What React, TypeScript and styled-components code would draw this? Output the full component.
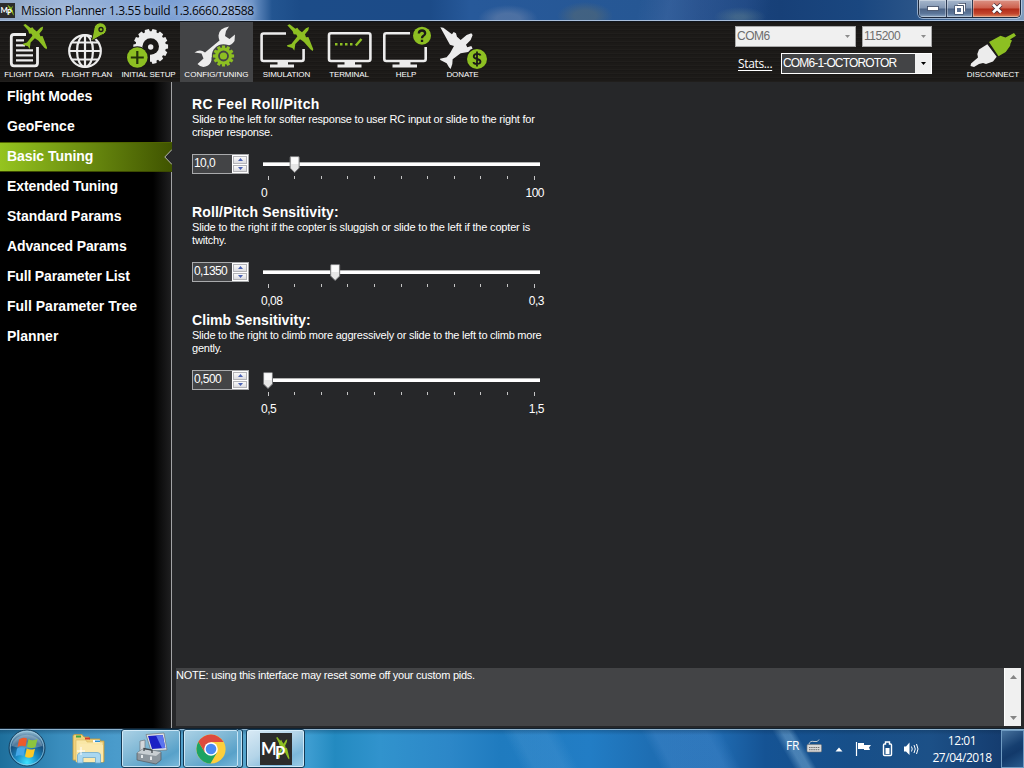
import React from "react";
import styled, { createGlobalStyle } from "styled-components";

const GlobalStyle = createGlobalStyle`
  * { box-sizing: border-box; }
  body { margin: 0; background: #262729; overflow: hidden; }
  svg { display: block; flex: none; }
`;

const sans = `"Liberation Sans", Arial, sans-serif`;
const ui = `"Open Sans", "Noto Sans", sans-serif`;

const Screen = styled.div`
  width: 1024px;
  height: 768px;
  display: flex;
  flex-direction: column;
  overflow: hidden;
  background: #262729;
  font-family: ${sans};
  color: #fff;
`;

/* ---------- title bar ---------- */
const TitleBar = styled.header`
  height: 22px;
  flex: none;
  display: flex;
  align-items: flex-start;
  border-bottom: 1px solid #11151c;
  box-shadow: inset 0 -1px 0 #a9bfdc;
  background:
    radial-gradient(ellipse 30px 14px at 508px 19px, rgba(86, 118, 165, 0.8) 40%, transparent),
    radial-gradient(ellipse 28px 14px at 585px 16px, rgba(72, 100, 125, 0.8) 40%, transparent),
    radial-gradient(ellipse 26px 10px at 740px 17px, rgba(92, 125, 140, 0.5) 20%, transparent),
    linear-gradient(100deg, transparent 630px, rgba(90, 130, 190, 0.3) 660px, rgba(60, 100, 165, 0.25) 735px, transparent 760px),
    linear-gradient(90deg, #8fa5c4 0, #9db5d8 60px, #88a8d6 130px, #7a9fd4 170px, #93afdc 225px, #6f95c8 252px, #235591 272px, #1c4c88 300px, #1c4b88 430px, #27599a 470px, #265794 640px, #1c4681 700px, #174078 780px, #1a4780 860px, #2a5488 915px, #7f9cbd 1024px);
`;
const TitleText = styled.h1`
  margin: 0;
  padding-left: 6px;
  flex: 1;
  font: 400 12px/21px ${ui};
  letter-spacing: -0.29px;
  color: #05080e;
  text-shadow: 0 0 6px rgba(255, 255, 255, 0.6);
`;
const LogoSlot = styled.div`
  padding-top: 3px;
`;
const WindowButtons = styled.div`
  display: flex;
  height: 18px;
  margin-right: 3px;
  border: 1px solid #1e2a3e;
  border-top: 0;
  border-radius: 0 0 5px 5px;
  overflow: hidden;
  box-shadow: 0 0 0 1px rgba(215, 228, 245, 0.6);
`;
const WindowButton = styled.button<{ $w: number; $close?: boolean }>`
  width: ${(p) => p.$w}px;
  padding: 0;
  border: 0;
  border-left: ${(p) => (p.$w === 27 ? "0" : "1px solid #2c3a52")};
  display: grid;
  place-items: center;
  box-shadow: inset 0 0 0 1px rgba(255, 255, 255, 0.35);
  background: ${(p) =>
    p.$close
      ? "linear-gradient(#dc9385 0, #cd5f4c 48%, #b02a17 52%, #c2442c 80%, #dd8a62)"
      : "linear-gradient(#a6b7cd 0, #8296b2 48%, #4d6486 52%, #5c7699 80%, #8faac8)"};
`;

/* ---------- toolbar ---------- */
const Toolbar = styled.nav`
  height: 60px;
  flex: none;
  display: flex;
  padding-left: 1px;
  background:
    repeating-linear-gradient(0deg, rgba(255, 240, 220, 0.018) 0 1px, transparent 1px 3px, rgba(0, 0, 0, 0.1) 3px 4px),
    #1c1a18;
`;
const Tool = styled.button<{ $w: number; $active?: boolean }>`
  width: ${(p) => p.$w}px;
  height: 60px;
  padding: 0;
  border: 0;
  display: flex;
  flex-direction: column;
  align-items: center;
  gap: 1px;
  background: ${(p) => (p.$active ? "#434446" : "transparent")};
`;
const ToolLabel = styled.span<{ $track: number }>`
  font: 400 8px/9px ${sans};
  letter-spacing: ${(p) => p.$track}px;
  color: #fff;
  white-space: nowrap;
`;
const Spacer = styled.div`
  flex: 1;
`;
const Connection = styled.div`
  width: 197px;
  padding-top: 4px;
  display: flex;
  flex-direction: column;
  gap: 6px;
  margin-right: 30px;
`;
const ConnRow = styled.div`
  display: flex;
  justify-content: space-between;
  align-items: center;
`;
const Combo = styled.div<{ $w: number; $dark?: boolean }>`
  width: ${(p) => p.$w}px;
  height: 21px;
  display: flex;
  align-items: stretch;
  justify-content: space-between;
  border: 1px solid ${(p) => (p.$dark ? "#fff" : "#a9a9a9")};
  background: ${(p) => (p.$dark ? "#434446" : "#f0f0f0")};
  color: ${(p) => (p.$dark ? "#fff" : "#6d6d6d")};
  font: 400 12px/18px ${sans};
  letter-spacing: ${(p) => (p.$dark ? "-0.85px" : "-0.5px")};
  padding-left: 1px;
`;
const ComboArrow = styled.div<{ $dark?: boolean }>`
  width: 16px;
  display: grid;
  place-items: center;
  background: #f0f0f0;
  color: ${(p) => (p.$dark ? "#000" : "#8c8c8c")};
`;
const StatsLink = styled.a`
  font: 400 12px/14px ${ui};
  letter-spacing: -0.35px;
  color: #fff;
  padding-left: 3px;
  text-decoration: underline;
  text-underline-offset: 2px;
`;

/* ---------- body ---------- */
const Body = styled.div`
  height: 646px;
  display: flex;
`;
const Sidebar = styled.aside`
  width: 172px;
  display: flex;
  flex-direction: column;
  border-right: 1px solid #a3a4a6;
  background: linear-gradient(90deg, #000 153px, #1f1f20 171px);
`;
const NavItem = styled.a<{ $active?: boolean; $track: number }>`
  height: 30px;
  width: ${(p) => (p.$active ? "172px" : "auto")};
  flex: none;
  display: flex;
  align-items: center;
  justify-content: space-between;
  padding-left: 7px;
  font: 700 14px/28px ${sans};
  letter-spacing: ${(p) => p.$track}px;
  color: #fff;
  ${(p) =>
    p.$active &&
    `background: linear-gradient(90deg, #95c41f, #405400);
     box-shadow: inset 0 1px 0 #506400, inset 0 -1px 0 #3c4a00;`}
`;
const NavLabel = styled.span`
  padding-bottom: 2px;
`;
const Main = styled.main`
  flex: 1;
  display: flex;
  flex-direction: column;
  justify-content: space-between;
  padding: 14px 3px 2px 3px;
`;
const Sections = styled.div`
  padding-left: 17px;
`;
const Section = styled.section`
  width: 356px;
  height: 108px;
  display: flex;
  flex-direction: column;
`;
const Heading = styled.h2<{ $track: number }>`
  margin: 0;
  font: 700 14px/17px ${sans};
  letter-spacing: ${(p) => p.$track}px;
  white-space: nowrap;
`;
const Description = styled.p<{ $track: number }>`
  margin: 0;
  height: 41px;
  font: 400 11px/13px ${sans};
  letter-spacing: ${(p) => p.$track}px;
  white-space: pre-line;
`;
const Control = styled.div`
  display: flex;
  gap: 12px;
`;
const NumberBox = styled.div`
  width: 57px;
  height: 20px;
  display: flex;
  justify-content: space-between;
  border: 1px solid #a9aaac;
  background: #434446;
  font: 400 12px/17px ${sans};
  letter-spacing: -0.6px;
  padding-left: 1px;
`;
const Spinner = styled.div`
  width: 16px;
  padding: 1px;
  display: flex;
  flex-direction: column;
  gap: 1px;
  background: #fff;
`;
const SpinButton = styled.button`
  flex: 1;
  padding: 0;
  border: 1px solid #b4b4b8;
  display: grid;
  place-items: center;
  background: linear-gradient(#fafafa, #dcdce0);
`;
const SliderColumn = styled.div`
  width: 283px;
  display: flex;
  flex-direction: column;
`;
const RangeLabels = styled.div`
  display: flex;
  justify-content: space-between;
  margin-top: 1px;
  font: 400 12px/14px ${sans};
  letter-spacing: -0.5px;
`;
const Note = styled.div`
  height: 58px;
  display: flex;
  margin-left: 1px;
  justify-content: space-between;
  background: #434446;
  font: 400 11px/14px ${sans};
  letter-spacing: -0.24px;
`;
const ScrollBar = styled.div`
  width: 17px;
  display: flex;
  flex-direction: column;
  align-items: center;
  justify-content: space-between;
  padding: 7px 0 6px;
  background: #f0f0f0;
  border-left: 1px solid #fff;
`;

/* ---------- taskbar ---------- */
const Taskbar = styled.footer`
  height: 40px;
  flex: none;
  display: flex;
  align-items: stretch;
  border-top: 1px solid #122230;
  box-shadow: inset 0 1px 0 #8db3cf;
  background:
    linear-gradient(rgba(10, 40, 70, 0.35), transparent 6px),
    linear-gradient(240deg, transparent 199px, rgba(150, 200, 235, 0.4) 205px 211px, transparent 219px),
    linear-gradient(242deg, transparent 268px, rgba(100, 160, 225, 0.24) 282px 328px, transparent 339px),
    linear-gradient(242deg, transparent 411px, rgba(120, 180, 230, 0.17) 424px 450px, transparent 462px),
    linear-gradient(90deg, #1e6f9c 0, #3a8dbd 60px, #4a9bcb 115px, #56a5cd 240px, #3c9cd0 310px, #238ac0 335px, #3193cd 380px, #2c87c8 450px, #1f7bbf 500px, #227dc5 590px, #1e6eb3 650px, #1f6ab0 720px, #155394 765px, #174f89 850px, #1c5087 930px, #153d70 1000px);
`;
const StartSlot = styled.div`
  width: 61px;
  padding-left: 8px;
`;
const PinSlot = styled.div`
  width: 60px;
  padding: 4px 0 0 11px;
`;
const TaskButton = styled.button<{ $w: number; $gap: number; $bright?: boolean }>`
  width: ${(p) => p.$w}px;
  margin: 0 ${(p) => p.$gap}px 0 0;
  padding: 0;
  display: grid;
  place-items: center;
  border: 1px solid #143a55;
  border-radius: 3px;
  box-shadow: inset 0 0 0 1px rgba(225, 244, 255, 0.75);
  background: ${(p) =>
    p.$bright
      ? "linear-gradient(150deg, #d9eaf5, #b3d4e8 45%, #7db8da 75%, #9ccce6)"
      : "linear-gradient(150deg, #acd2e6, #7db6d4 45%, #58a1c9 75%, #7cbadb)"};
`;
const StackEdge = styled.div`
  width: 5px;
  margin: 0 3px 0 -1px;
  border: 1px solid #143a55;
  border-left: 0;
  border-radius: 0 3px 3px 0;
  background: #6fb0d3;
  box-shadow: inset -1px 0 0 rgba(225, 244, 255, 0.75);
`;
const Tray = styled.div`
  display: flex;
  align-items: center;
`;
const Lang = styled.span`
  font: 400 12px/16px ${ui};
  letter-spacing: -0.3px;
  padding-bottom: 5px;
  width: 20px;
`;
const TrayIconSlot = styled.div`
  padding-bottom: 3px;
  margin-right: -1px;
`;
const Clock = styled.div`
  width: 76px;
  padding: 1px 2px 0 0;
  display: flex;
  flex-direction: column;
  align-items: center;
  font: 400 12px/17px ${ui};
  letter-spacing: -0.45px;
`;
const ShowDesktop = styled.div`
  width: 23px;
  margin-top: 1px;
  border: 1px solid #6f9bc2;
  background: linear-gradient(150deg, #47729d, #163f70 45%, #12396a 60%, #285a8c);
`;

/* ---------- drawings ---------- */
const GREEN = "#8dbf22";
const WHITE = "#ececec";

const Triangle = ({ up, w = 5, h = 3, color = "currentColor" }: { up?: boolean; w?: number; h?: number; color?: string }) => (
  <svg width={w} height={h} viewBox="0 0 10 6" preserveAspectRatio="none">
    <path d={up ? "M0 6L5 0L10 6Z" : "M0 0L5 6L10 0Z"} fill={color} />
  </svg>
);

/* Twin-engine plane banking to the upper right, in an 80 by 80 box */
const Plane = ({ x, y, sx, sy }: { x: number; y: number; sx: number; sy: number }) => (
  <path
    d="M1 3L8 0L25 13L31 10L36 17L45 24L57 12L66 8L64 18L54 30L57 39L64 38L67 45L79 75L77 80L70 75L51 53L45 49L39 45L25 59L22 79L16 71L1 67L0 63L13 59L31 37L28 31L20 30L17 21Z"
    fill={GREEN}
    transform={`translate(${x} ${y}) scale(${sx} ${sy})`}
  />
);

function gearPath(cx: number, cy: number, outer: number, inner: number, teeth: number) {
  let d = "";
  for (let i = 0; i < teeth; i++) {
    const a = (i / teeth) * Math.PI * 2;
    const step = (Math.PI * 2) / teeth;
    [[-0.38, inner], [-0.27, outer], [0.27, outer], [0.38, inner]].forEach(([k, r], j) => {
      const t = a + k * step;
      d += `${i === 0 && j === 0 ? "M" : "L"}${(cx + r * Math.cos(t)).toFixed(2)} ${(cy + r * Math.sin(t)).toFixed(2)}`;
    });
  }
  return d + "Z";
}

const FlightDataIcon = () => (
  <>
    <path d="M25 12.500H13Q10.300 12.500 10.300 15V41Q10.300 43.800 13 43.800H34Q36.500 43.800 36.500 41V25" fill="none" stroke={WHITE} strokeWidth="2.800" />
    <path d="M15 18.300H23M15 23.300H24M15 28.300H32M15 33.300H32M15 38.300H32" stroke={WHITE} strokeWidth="2.200" />
    <Plane x={22} y={2} sx={0.305} sy={0.315} />
  </>
);
const FlightPlanIcon = () => (
  <>
    <g fill="none" stroke={WHITE} strokeWidth="2.200">
      <circle cx="28" cy="29" r="15.800" />
      <ellipse cx="28" cy="29" rx="8" ry="15.800" />
      <path d="M28 13V45M12 29H44M15 20.500H41M15 37.500H41" />
    </g>
    <path d="M34.500 19L37 6.500A6.300 6.300 0 1 1 44.500 13.200Z" fill={GREEN} stroke="#1b1917" strokeWidth="1" />
    <circle cx="44" cy="7.500" r="2" fill="none" stroke="#1b1917" strokeWidth="1.300" />
  </>
);
const SetupIcon = () => (
  <>
    <path d={gearPath(33.7, 24.5, 17.5, 15.2, 14)} fill={WHITE} />
    <circle cx="33.700" cy="24.500" r="8.300" fill="#1b1917" />
    <path d="M33 27V44H18Z" fill="#1b1917" />
    <circle cx="33.700" cy="25" r="2.700" fill={WHITE} />
    <circle cx="20.300" cy="35.500" r="11.300" fill="#1b1917" />
    <circle cx="20.300" cy="35.500" r="10.300" fill={GREEN} />
    <path d="M20.300 29V42M13.800 35.500H26.800" stroke="#23320a" strokeWidth="2.200" />
  </>
);
const ConfigIcon = () => (
  <>
    <path
      d="M49 4.500Q39 6 38.500 13.500Q38.500 16.500 39.500 18.500L25 30.500Q20 26.500 14.500 30.500L21.500 31.500L23.500 36.500L17.500 42Q22 47 28 43.500Q32 41 31.500 35.500L45 23.500Q51 24.500 54.500 19L55 12.500L49.500 17L45 14L46 9Z"
      fill={WHITE}
    />
    <circle cx="43.500" cy="34" r="11.700" fill="#434446" />
    <path d={gearPath(43.5, 34, 10.7, 8.4, 12)} fill={GREEN} />
    <circle cx="43.500" cy="34" r="4.500" fill="none" stroke="#434446" strokeWidth="1.800" />
  </>
);
const monitor = { fill: "none", stroke: WHITE, strokeWidth: 2.6 };
const SimulationIcon = () => (
  <>
    <path d="M33 11.500H10.600Q8.600 11.500 8.600 13.500V37Q8.600 39 10.600 39H48.600Q50.600 39 50.600 37V27" {...monitor} />
    <path d="M24.500 39H35V42.500H41V45.500H17V42.500H24.500Z" fill={WHITE} />
    <Plane x={34} y={2.300} sx={0.333} sy={0.333} />
  </>
);
const TerminalIcon = () => (
  <>
    <rect x="9" y="11.300" width="41.400" height="27.700" rx="2" {...monitor} />
    <path d="M24.500 39H35V42.500H41.500V45.500H17.500V42.500H24.500Z" fill={WHITE} />
    <path d="M15 22.300H17.500M20 22.300H22.500M25 22.300H27.500M30 22.300H32.500" stroke={GREEN} strokeWidth="2.400" />
    <path d="M35.800 23.500L41.500 17" stroke={GREEN} strokeWidth="2.400" />
  </>
);
const HelpIcon = () => (
  <>
    <path d="M32 11.300H8.300Q6.300 11.300 6.300 13.300V37Q6.300 39 8.300 39H45.700Q47.700 39 47.700 37V25" {...monitor} />
    <path d="M21.500 39H32.500V42.500H39V45.500H14.500V42.500H21.500Z" fill={WHITE} />
    <circle cx="44" cy="13.700" r="9" fill={GREEN} />
    <path d="M40.800 11.500Q41 8.500 44 8.500T47.200 11.300Q47.200 13 45.200 14Q44 14.700 44 16.300M44 17.700V20" fill="none" stroke="#1b1917" strokeWidth="2.300" />
  </>
);
const DonateIcon = () => (
  <>
    <path
      d="M571 22L580 23L606 43L611 36L618 40L621 50L632 60L650 45L664 40L668 45L662 60L648 74L652 82L664 78L669 88L680 112L655 96L632 100L608 118L607 132L602 147L597 142L590 130L571 120L570 116L590 112L600 100L612 78L600 74L592 60Z"
      fill={WHITE}
      transform="translate(-184 -2) scale(0.3333)"
    />
    <circle cx="43" cy="37" r="11.200" fill="#1b1917" />
    <circle cx="43" cy="37" r="10" fill={GREEN} />
    <path d="M46.500 33.500Q46 31.800 43 31.800T39.700 34.300Q39.700 36.300 43 37T46.500 39.600Q46.500 42 43 42T39.500 40M43 29.500V44.500" fill="none" stroke="#1b1917" strokeWidth="1.800" />
  </>
);

const tools = [
  { label: "FLIGHT DATA", w: 56, track: -0.1, Icon: FlightDataIcon },
  { label: "FLIGHT PLAN", w: 60, track: -0.1, Icon: FlightPlanIcon },
  { label: "INITIAL SETUP", w: 63, track: -0.12, Icon: SetupIcon },
  { label: "CONFIG/TUNING", w: 73, track: 0.02, Icon: ConfigIcon, active: true },
  { label: "SIMULATION", w: 67, track: -0.1, Icon: SimulationIcon },
  { label: "TERMINAL", w: 58, track: -0.1, Icon: TerminalIcon },
  { label: "HELP", w: 56, track: -0.1, Icon: HelpIcon },
  { label: "DONATE", w: 57, track: -0.1, Icon: DonateIcon },
];

const PlugIcon = () => (
  <svg width="62" height="47" viewBox="0 0 62 47">
    <path d="M12 45L8.500 44L9 41.500L16 35.500L15.300 32L17 27.500L25.300 22.300L34.700 34.700L31 39.500L24 42L21 41L17 42Z" fill={WHITE} />
    <path d="M27 20L38.500 13.700L43.500 15.500L52 11L54 13.700L48 17.500L50 18.500L48.500 21.500L48 24L43.700 30L36.500 34.300Z" fill={GREEN} />
  </svg>
);

const MpLogo = ({ size }: { size: number }) => (
  <svg width={size} height={size} viewBox="0 0 32 32">
    <rect width="32" height="32" fill="#2c2c2c" />
    <Plane x={16} y={4} sx={0.17} sy={0.28} />
    <text x="1" y="21.500" fontFamily="Lato, sans-serif" fontSize="16.500" fontWeight="700" fill="#fff">
      M<tspan dx="-1.500" dy="4">P</tspan>
    </text>
  </svg>
);

const Slider = ({ value }: { value: number }) => {
  const thumb = 5 + value * 266.5;
  return (
    <svg width="280" height="31" viewBox="0 0 280 31">
      <rect x="2" y="8" width="277" height="4" fill="#fff" />
      <rect x="2" y="8" width="277" height="1" fill="#b0b1b1" />
      {Array.from({ length: 11 }, (_, i) => (
        <rect key={i} x={Math.round(6.5 + i * 26.6)} y="22" width="1" height={i % 10 === 0 ? 4 : 3} fill="#c6c6c6" />
      ))}
      <g transform={`translate(${thumb + 2} 0)`}>
        <path d="M-4.500 3.500Q-4.500 2.500 -3.500 2.500H3.500Q4.500 2.500 4.500 3.500V14L0 18.500L-4.500 14Z" fill="#e6e6e6" stroke="#77787a" />
        <path d="M-3.500 3.500H3.500V10H-3.500Z" fill="#fbfbfb" />
      </g>
    </svg>
  );
};

const sections = [
  { title: "RC Feel Roll/Pitch", text: "Slide to the left for softer response to user RC input or slide to the right for\ncrisper response.", value: "10,0", min: "0", max: "100", pos: 0.1, track: -0.21, headTrack: 0.4 },
  { title: "Roll/Pitch Sensitivity:", text: "Slide to the right if the copter is sluggish or slide to the left if the copter is\ntwitchy.", value: "0,1350", min: "0,08", max: "0,3", pos: 0.252, track: -0.18, headTrack: 0.16 },
  { title: "Climb Sensitivity:", text: "Slide to the right to climb more aggressively or slide to the left to climb more\ngently.", value: "0,500", min: "0,5", max: "1,5", pos: 0, track: -0.24, headTrack: 0.07 },
];

const navItems = [
  { label: "Flight Modes", track: -0.1 },
  { label: "GeoFence", track: 0 },
  { label: "Basic Tuning", track: -0.05 },
  { label: "Extended Tuning", track: -0.1 },
  { label: "Standard Params", track: -0.05 },
  { label: "Advanced Params", track: -0.12 },
  { label: "Full Parameter List", track: -0.18 },
  { label: "Full Parameter Tree", track: 0 },
  { label: "Planner", track: 0 },
];

const StartOrb = () => (
  <svg width="39" height="38" viewBox="0 0 39 38">
    <defs>
      <radialGradient id="orb" cx="50%" cy="90%" r="85%">
        <stop offset="0" stopColor="#3fe3ff" />
        <stop offset="0.35" stopColor="#1c8fc9" />
        <stop offset="0.7" stopColor="#174e7c" />
        <stop offset="1" stopColor="#8fb6cd" />
      </radialGradient>
    </defs>
    <circle cx="19" cy="19" r="18" fill="url(#orb)" stroke="#17415f" />
    <circle cx="19" cy="19" r="16.800" fill="none" stroke="#9fd1e8" strokeOpacity="0.700" />
    <path d="M3.500 17A16 15 0 0 1 34.500 17Q19 22 3.500 17Z" fill="#fff" opacity="0.250" />
    <path d="M11 10.500Q15 7.500 19 9.500L17.500 17.500Q13.500 15.800 9.500 18Z" fill="#ec5b2c" />
    <path d="M20.500 10Q24 12.500 29.500 10L27.500 18Q23 20 19 17.800Z" fill="#8cc63e" />
    <path d="M9 19.500Q13 17.500 17.200 19L15.500 27Q11.500 25.500 7.500 27.500Z" fill="#45a7e8" />
    <path d="M18.700 19.500Q22.500 21.500 27 19.700L25.200 27.500Q21 30 17 27.500Z" fill="#fdc927" />
  </svg>
);
const FolderIcon = () => (
  <svg width="34" height="32" viewBox="0 0 34 32">
    <path d="M1 27V3Q1 1.500 3 1.500H10L12 4H17V6H28V8H32V29Z" fill="#f0d27c" stroke="#c29a3e" strokeWidth="0.800" />
    <path d="M4 29V7H14L15 9H31V29Z" fill="#f9e7a6" stroke="#d6b55e" strokeWidth="0.600" />
    <path d="M7 29V11H20L21 12H31V29Z" fill="#fbe9ae" />
    <rect x="4" y="2.500" width="5" height="2" fill="#3fa645" />
    <rect x="13" y="4.500" width="5" height="2" fill="#d13a2c" />
    <rect x="21" y="7" width="7" height="2.500" fill="#fff" />
    <rect x="23" y="7.500" width="5" height="1.500" fill="#2b8fd0" />
    <path d="M5.500 30V22Q6 19.500 10 19.500H25Q28.500 19.500 28.500 22V30H23.500V24.500H11V30Z" fill="#a9d7f0" stroke="#6fa9cb" strokeWidth="0.800" />
    <path d="M9 14V22M5 18H13" stroke="#fff" strokeWidth="1" />
  </svg>
);
const ToolboxIcon = () => (
  <svg width="34" height="34" viewBox="0 0 34 34">
    <path d="M6 9L11 8V20H6Z" fill="#d4d8dc" stroke="#6f777e" strokeWidth="0.700" />
    <path d="M12 2.500L30 1L33 18L17 19Z" fill="#dfe3e6" stroke="#6f777e" strokeWidth="0.700" />
    <path d="M14 4L28.700 3L31.300 16L18 17Z" fill="#1a1fc4" />
    <path d="M22 3.500L28.700 3L31.300 16L28 16.200Z" fill="#5b74ee" />
    <path d="M3 21L9 17L27 20V28L22 32L3 28Z" fill="#8e979e" stroke="#535a60" strokeWidth="0.700" />
    <path d="M3 21L9 17L27 20L22 24Z" fill="#c8ced2" />
    <path d="M10 19V16.500L18 18V21" fill="none" stroke="#3f464c" strokeWidth="1.300" />
    <path d="M8 23V26M17 24.500V28" stroke="#e7eaec" strokeWidth="2" />
  </svg>
);
const ChromeIcon = () => (
  <svg width="30" height="30" viewBox="0 0 30 30">
    <circle cx="15" cy="15" r="14.600" fill="#fdcf3d" />
    <path d="M2.400 7.700A14.600 14.600 0 0 0 14.500 29.600L21 18.500L9 18.500Z" fill="#1da362" />
    <path d="M2.400 7.700A14.600 14.600 0 0 1 27.600 8H15L9 18.500Z" fill="#dd4b3e" />
    <circle cx="15" cy="15" r="6.800" fill="#fff" />
    <circle cx="15" cy="15" r="5.300" fill="#4a8af4" />
  </svg>
);
const TrayIcons = () => (
  <svg width="120" height="20" viewBox="0 0 120 20">
    <path d="M3 7Q4 3.500 8 4.500T13 2.500" fill="none" stroke="#bfc6cc" />
    <rect x="1" y="7.500" width="14.500" height="7.500" rx="1" fill="#d8d8d8" stroke="#777" strokeWidth="0.600" />
    <path d="M3 10.500H13.500M3 12.700H13.500" stroke="#6e6e6e" strokeDasharray="1.500 0.700" />
    <path d="M29.500 14.500L33 10.500L36.500 14.500Z" fill="#fff" />
    <path d="M50.500 5V19" stroke="#fff" strokeWidth="1.200" />
    <path d="M52 6H58V8H65L63 10.500L64 13H58V12H52Z" fill="#fff" />
    <path d="M79.500 5V7H78.500Q77.500 7 77.500 8V17.500Q77.500 18.500 78.500 18.500H84.500Q85.500 18.500 85.500 17.500V8Q85.500 7 84.500 7H83.500V5Z" fill="none" stroke="#fff" strokeWidth="1.400" />
    <rect x="79.500" y="11" width="4" height="6" fill="#fff" />
    <path d="M98 9.500H100L103.500 5.500V18L100 14.500H98Z" fill="#fff" />
    <path d="M105.500 9.500Q107 12 105.500 14.500M108 8Q110.500 12 108 16M110.500 7Q113.500 12 110.500 17" fill="none" stroke="#fff" strokeWidth="1" />
  </svg>
);

export default function App() {
  return (
    <Screen>
      <GlobalStyle />
      <TitleBar>
        <LogoSlot><MpLogo size={15} /></LogoSlot>
        <TitleText>Mission Planner 1.3.55 build 1.3.6660.28588</TitleText>
        <WindowButtons>
          <WindowButton $w={27} aria-label="Minimize">
            <svg width="12" height="5"><rect x="0.500" y="0.500" width="11" height="4" fill="#fff" stroke="#3a4660" strokeWidth="0.800" /></svg>
          </WindowButton>
          <WindowButton $w={26} aria-label="Restore">
            <svg width="12" height="12">
              <path d="M4.500 1.500H10.500V8M4.500 1.500V3" fill="none" stroke="#36435c" strokeWidth="3" />
              <path d="M3.500 1.500H10.500V8.500" fill="none" stroke="#fff" strokeWidth="1.400" />
              <rect x="2" y="4" width="6" height="6" fill="#5a6f90" stroke="#36435c" strokeWidth="3.200" />
              <rect x="2" y="4" width="6" height="6" fill="#5a6f90" stroke="#fff" strokeWidth="2" />
            </svg>
          </WindowButton>
          <WindowButton $w={48} $close aria-label="Close">
            <svg width="12" height="11">
              <path d="M2 1.500L10 9.500M10 1.500L2 9.500" stroke="#47303a" strokeWidth="4.200" />
              <path d="M2 1.500L10 9.500M10 1.500L2 9.500" stroke="#fff" strokeWidth="2.600" />
            </svg>
          </WindowButton>
        </WindowButtons>
      </TitleBar>

      <Toolbar>
        {tools.map(({ label, w, track, Icon, active }) => (
          <Tool key={label} $w={w} $active={active}>
            <svg width={w} height="47" viewBox={`0 0 ${w} 47`}><Icon /></svg>
            <ToolLabel $track={track}>{label}</ToolLabel>
          </Tool>
        ))}
        <Spacer />
        <Connection>
          <ConnRow>
            <Combo $w={121}>COM6<ComboArrow><Triangle /></ComboArrow></Combo>
            <Combo $w={70}>115200<ComboArrow><Triangle /></ComboArrow></Combo>
          </ConnRow>
          <ConnRow>
            <StatsLink>Stats...</StatsLink>
            <Combo $w={151} $dark>COM6-1-OCTOROTOR<ComboArrow $dark><Triangle /></ComboArrow></Combo>
          </ConnRow>
        </Connection>
        <Tool $w={62}>
          <PlugIcon />
          <ToolLabel $track={-0.05}>DISCONNECT</ToolLabel>
        </Tool>
      </Toolbar>

      <Body>
        <Sidebar>
          {navItems.map(({ label, track }) => {
            const active = label === "Basic Tuning";
            return (
              <NavItem key={label} $active={active} $track={track}>
                <NavLabel>{label}</NavLabel>
                {active && (
                  <svg width="8" height="16" viewBox="0 0 8 16">
                    <path d="M8 0.500L0.800 8L8 15.500Z" fill="#262729" />
                    <path d="M8 0.500L0.800 8L8 15.500" fill="none" stroke="#b9bbae" />
                  </svg>
                )}
              </NavItem>
            );
          })}
        </Sidebar>
        <Main>
          <Sections>
            {sections.map((s) => (
              <Section key={s.title}>
                <Heading $track={s.headTrack}>{s.title}</Heading>
                <Description $track={s.track}>{s.text}</Description>
                <Control>
                  <NumberBox>
                    {s.value}
                    <Spinner>
                      <SpinButton aria-label="Increase"><Triangle up w={5} h={3} color="#4a62b4" /></SpinButton>
                      <SpinButton aria-label="Decrease"><Triangle w={5} h={3} color="#4a62b4" /></SpinButton>
                    </Spinner>
                  </NumberBox>
                  <SliderColumn>
                    <Slider value={s.pos} />
                    <RangeLabels><span>{s.min}</span><span>{s.max}</span></RangeLabels>
                  </SliderColumn>
                </Control>
              </Section>
            ))}
          </Sections>
          <Note>
            <span>NOTE: using this interface may reset some off your custom pids.</span>
            <ScrollBar><Triangle up w={7} h={4} color="#858585" /><Triangle w={7} h={4} color="#858585" /></ScrollBar>
          </Note>
        </Main>
      </Body>

      <Taskbar>
        <StartSlot><StartOrb /></StartSlot>
        <PinSlot><FolderIcon /></PinSlot>
        <TaskButton $w={60} $gap={2}><ToolboxIcon /></TaskButton>
        <TaskButton $w={56} $gap={0}><ChromeIcon /></TaskButton>
        <StackEdge />
        <TaskButton $w={59} $gap={0} $bright><MpLogo size={32} /></TaskButton>
        <Spacer />
        <Tray>
          <Lang>FR</Lang>
          <TrayIconSlot><TrayIcons /></TrayIconSlot>
          <Clock><span>12:01</span><span>27/04/2018</span></Clock>
        </Tray>
        <ShowDesktop />
      </Taskbar>
    </Screen>
  );
}
